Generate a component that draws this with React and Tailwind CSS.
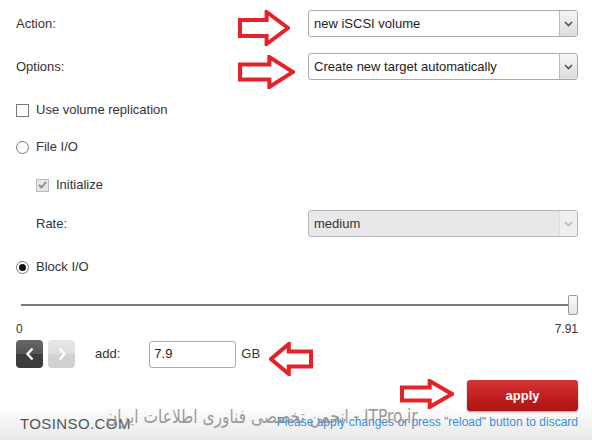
import React from "react";

function Chevron({ color = "#555" }) {
  return (
    <svg width="9" height="6" viewBox="0 0 9 6">
      <path d="M1 1 L4.5 4.5 L8 1" fill="none" stroke={color} strokeWidth="1.6" />
    </svg>
  );
}

function Select({ value, disabled }) {
  return (
    <div
      className={`flex h-[27px] w-[270px] items-stretch rounded-[3px] border ${
        disabled ? "border-[#b8b8b8] bg-[#e9e7e9]" : "border-[#aaa] bg-white"
      }`}
    >
      <div className={`flex flex-1 items-center pl-[5px] text-[13px] ${disabled ? "text-[#333]" : "text-[#222]"}`}>{value}</div>
      <div
        className={`flex w-[18px] items-center justify-center rounded-r-[3px] border-l ${
          disabled
            ? "border-[#ddd] bg-[#eeeeee]"
            : "border-[#bbb] bg-[linear-gradient(to_bottom,#f6f6f6,#dcdcdc)]"
        }`}
      >
        <Chevron color={disabled ? "#bbb" : "#555"} />
      </div>
    </div>
  );
}

function Arrow({ dir = "right", w, h, className }) {
  const pts =
    dir === "right"
      ? `2,${h * 0.28} ${w * 0.55},${h * 0.28} ${w * 0.55},2 ${w - 2},${h / 2} ${w * 0.55},${h - 2} ${w * 0.55},${h * 0.72} 2,${h * 0.72}`
      : `${w - 2},${h * 0.28} ${w * 0.45},${h * 0.28} ${w * 0.45},2 2,${h / 2} ${w * 0.45},${h - 2} ${w * 0.45},${h * 0.72} ${w - 2},${h * 0.72}`;
  return (
    <svg width={w} height={h} className={className} viewBox={`0 0 ${w} ${h}`}>
      <polygon points={pts} fill="white" stroke="#e3222a" strokeWidth="4" strokeLinejoin="miter" />
    </svg>
  );
}

function Radio({ checked }) {
  return (
    <div className="flex h-[13px] w-[13px] items-center justify-center rounded-full border border-[#777] bg-white">
      {checked && <div className="h-[7px] w-[7px] rounded-full bg-[#111]" />}
    </div>
  );
}

export default function App() {
  return (
    <div
      className="relative h-[440px] w-[592px] overflow-hidden bg-[linear-gradient(to_bottom,#ffffff_92%,#e8e8e8)] pl-[16px] pr-[14px] text-[13px] text-[#333]"
      style={{ fontFamily: '"Liberation Sans", Arial, sans-serif' }}
    >
      <div className="flex flex-col">
        {/* Action */}
        <div className="mt-[10px] flex h-[27px] items-center justify-between">
          <span>Action:</span>
          <Select value="new iSCSI volume" />
        </div>
        {/* Options */}
        <div className="mt-[16px] flex h-[27px] items-center justify-between">
          <span>Options:</span>
          <Select value="Create new target automatically" />
        </div>
        {/* Replication */}
        <div className="mt-[20px] flex h-[20px] items-center gap-[7px]">
          <div className="h-[13px] w-[13px] border border-[#777] bg-white" />
          <span>Use volume replication</span>
        </div>
        {/* File I/O */}
        <div className="mt-[17px] flex h-[20px] items-center gap-[7px]">
          <Radio />
          <span>File I/O</span>
        </div>
        {/* Initialize */}
        <div className="mt-[18px] flex h-[20px] items-center gap-[7px] pl-[20px]">
          <div className="flex h-[13px] w-[13px] items-center justify-center border border-[#bbb] bg-[#e6e6e6]">
            <svg width="9" height="8" viewBox="0 0 9 8">
              <path d="M1 4 L3.5 6.5 L8 1" fill="none" stroke="#888" strokeWidth="1.8" />
            </svg>
          </div>
          <span>Initialize</span>
        </div>
        {/* Rate */}
        <div className="mt-[15px] flex h-[27px] items-center justify-between pl-[20px]">
          <span>Rate:</span>
          <Select value="medium" disabled />
        </div>
        {/* Block I/O */}
        <div className="mt-[20px] flex h-[20px] items-center gap-[7px]">
          <Radio checked />
          <span>Block I/O</span>
        </div>
        {/* Slider */}
        <div className="mt-[18px] flex h-[20px] items-center pl-[5px]">
          <div className="h-[2px] flex-1 bg-[#7a7a7a]" />
          <div className="h-[20px] w-[10px] rounded-[2px] border border-[#999] bg-[linear-gradient(to_bottom,#fafafa,#e4e4e4)]" />
        </div>
        <div className="mt-[6px] flex h-[15px] items-center justify-between text-[12px] text-[#333]">
          <span>0</span>
          <span>7.91</span>
        </div>
        {/* buttons row */}
        <div className="mt-[4px] flex h-[28px] items-center">
          <div className="flex h-[28px] w-[27px] items-center justify-center rounded-[4px] bg-[linear-gradient(to_bottom,#666_0%,#555_50%,#3e3e3e_51%,#3a3a3a_100%)]">
            <svg width="10" height="14" viewBox="0 0 10 14">
              <path d="M7.5 1.5 L2.5 7 L7.5 12.5" fill="none" stroke="white" strokeWidth="2.4" />
            </svg>
          </div>
          <div className="ml-[5px] flex h-[28px] w-[27px] items-center justify-center rounded-[4px] bg-[linear-gradient(to_bottom,#e6e6e6_0%,#dedede_50%,#d2d2d2_51%,#d0d0d0_100%)]">
            <svg width="10" height="14" viewBox="0 0 10 14">
              <path d="M2.5 1.5 L7.5 7 L2.5 12.5" fill="none" stroke="white" strokeWidth="2.2" />
            </svg>
          </div>
          <span className="ml-[20px]">add:</span>
          <div className="ml-[29px] flex h-[27px] w-[87px] items-center rounded-[3px] border border-[#aaa] bg-white pl-[4px] text-[#222]">
            7.9
          </div>
          <span className="ml-[5px]">GB</span>
        </div>
        {/* Apply */}
        <div className="mt-[12px] flex h-[30px] justify-end">
          <div className="flex h-[31px] w-[111px] items-center justify-center rounded-[3px] bg-[linear-gradient(to_bottom,#d43636,#c32020_50%,#ad1414)] text-[13px] font-bold text-white shadow-[0_1px_2px_rgba(0,0,0,0.4)]">
            apply
          </div>
        </div>
        <div className="mt-[5px] flex h-[14px] items-center justify-end text-[12px] text-[#3a8fd8]">
          Please apply changes or press "reload" button to discard
        </div>
      </div>

      {/* annotation arrows */}
      <Arrow dir="right" w={52} h={36} className="absolute left-[238px] top-[10px]" />
      <Arrow dir="right" w={57} h={34} className="absolute left-[238px] top-[55px]" />
      <Arrow dir="left" w={44} h={34} className="absolute left-[269px] top-[342px]" />
      <Arrow dir="right" w={54} h={30} className="absolute left-[400px] top-[379px]" />

      {/* watermark */}
      <div className="absolute left-[20px] top-[413px] text-[15px] tracking-[0.4px] text-[#555]">
        TOSINSO.COM
      </div>
      <div
        className="absolute left-[106px] top-[402px] origin-left scale-x-[0.81] whitespace-nowrap text-[19px] text-[#8c8c8c] opacity-85"
        style={{ fontFamily: '"DejaVu Sans", sans-serif' }}
      >
        انجمن تخصصی فناوری اطلاعات ایران - ITPro.ir
      </div>
    </div>
  );
}
